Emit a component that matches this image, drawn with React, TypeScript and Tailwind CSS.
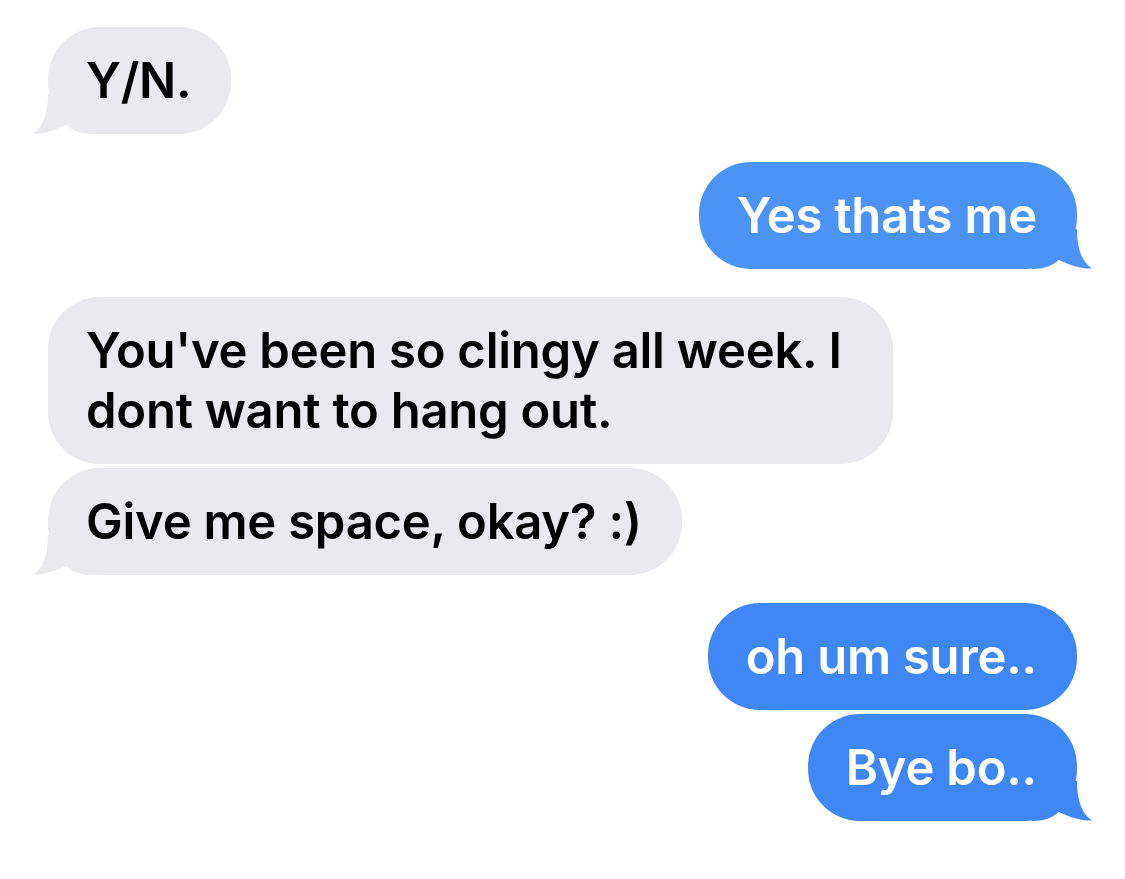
import { clsx } from 'clsx'

type Msg = { text: string; me: boolean; tail: boolean; tone?: string }

const messages: Msg[][] = [
  [{ text: 'Y/N.', me: false, tail: true }],
  [{ text: 'Yes thats me', me: true, tail: true, tone: 'light' }],
  [
    { text: "You've been so clingy all week. I dont want to hang out.", me: false, tail: false },
    { text: 'Give me space, okay? :)', me: false, tail: true },
  ],
  [
    { text: 'oh um sure..', me: true, tail: false },
    { text: 'Bye bo..', me: true, tail: true },
  ],
]

function Tail({ me, color }: { me: boolean; color: string }) {
  return (
    <svg
      viewBox="0 0 60 40"
      className={clsx(
        'absolute bottom-0 h-[40px] w-[60px]',
        me ? '-right-[15px] -scale-x-100' : '-left-[15px]'
      )}
    >
      <path
        d="M15 0 C15 20 10 33 0 39.5 C10 40 20 37 33 31 C40 37 48 40 60 40 L60 0 Z"
        fill={color}
      />
    </svg>
  )
}

function Bubble({ msg }: { msg: Msg }) {
  const color = !msg.me ? '#e9e9ee' : msg.tone === 'light' ? '#4b94f5' : '#3e87f5'
  return (
    <div className={clsx('flex', msg.me ? 'justify-end' : 'justify-start')}>
      <div
        className={clsx(
          'relative max-w-[845px] rounded-[52px] pl-[38px] pr-10 py-[23.5px] text-[49px] leading-[60px] font-semibold tracking-[-0.005em]',
          msg.me ? 'text-white' : 'text-black'
        )}
        style={{ backgroundColor: color }}
      >
        {msg.tail && <Tail me={msg.me} color={color} />}
        <span className="relative">{msg.text}</span>
      </div>
    </div>
  )
}

export default function App() {
  return (
    <div
      className="min-h-[879px] w-[1125px] bg-white px-12 pt-[27px]"
      style={{ fontFamily: 'Inter, "Noto Sans", sans-serif' }}
    >
      <div className="flex flex-col gap-7">
        {messages.map((group, i) => (
          <div key={i} className="flex flex-col gap-1">
            {group.map((m, j) => (
              <Bubble key={j} msg={m} />
            ))}
          </div>
        ))}
      </div>
    </div>
  )
}
